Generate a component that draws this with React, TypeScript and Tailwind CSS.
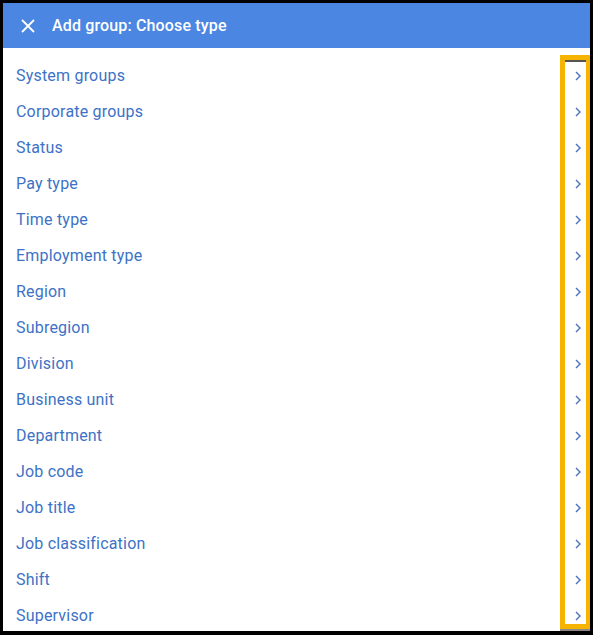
const groupTypes = [
  "System groups",
  "Corporate groups",
  "Status",
  "Pay type",
  "Time type",
  "Employment type",
  "Region",
  "Subregion",
  "Division",
  "Business unit",
  "Department",
  "Job code",
  "Job title",
  "Job classification",
  "Shift",
  "Supervisor",
]

const Chevron = () => (
  <svg width="8" height="10" viewBox="0 0 8 10" className="text-[#4a6fc0]">
    <path d="M2 1 L6 5 L2 9" fill="none" stroke="currentColor" strokeWidth="1.4" />
  </svg>
)

const App = () => {
  return (
    <div className="w-[593px] h-[635px] bg-black pt-[3px] pl-[3px] pr-[3px] pb-[4px] font-['Roboto',sans-serif]">
      <div className="relative h-full bg-white overflow-hidden">
        <header className="flex h-[45px] items-center bg-[#4a86e2] text-white">
          <svg width="14" height="14" viewBox="0 0 14 14" className="ml-[18px]">
            <path d="M1 1 L13 13 M13 1 L1 13" stroke="currentColor" strokeWidth="1.8" />
          </svg>
          <h1 className="ml-[17px] text-[16px] font-medium tracking-[0.15px]">Add group: Choose type</h1>
        </header>

        <ul className="pt-[10px]">
          {groupTypes.map((t) => (
            <li key={t} className="flex h-[36px] items-center justify-between pl-[13px] pr-[8px]">
              <span className="text-[16px] tracking-[0.2px] text-[#3d72c6]">{t}</span>
              <Chevron />
            </li>
          ))}
        </ul>

        {/* callout box around chevrons */}
        <div className="absolute left-[557px] top-[52px] w-[31px] h-[574px] border-[5px] border-[#f6b400] shadow-[inset_0_2px_0_#555,0_3px_0_#888]" />
      </div>
    </div>
  )
}

export default App
